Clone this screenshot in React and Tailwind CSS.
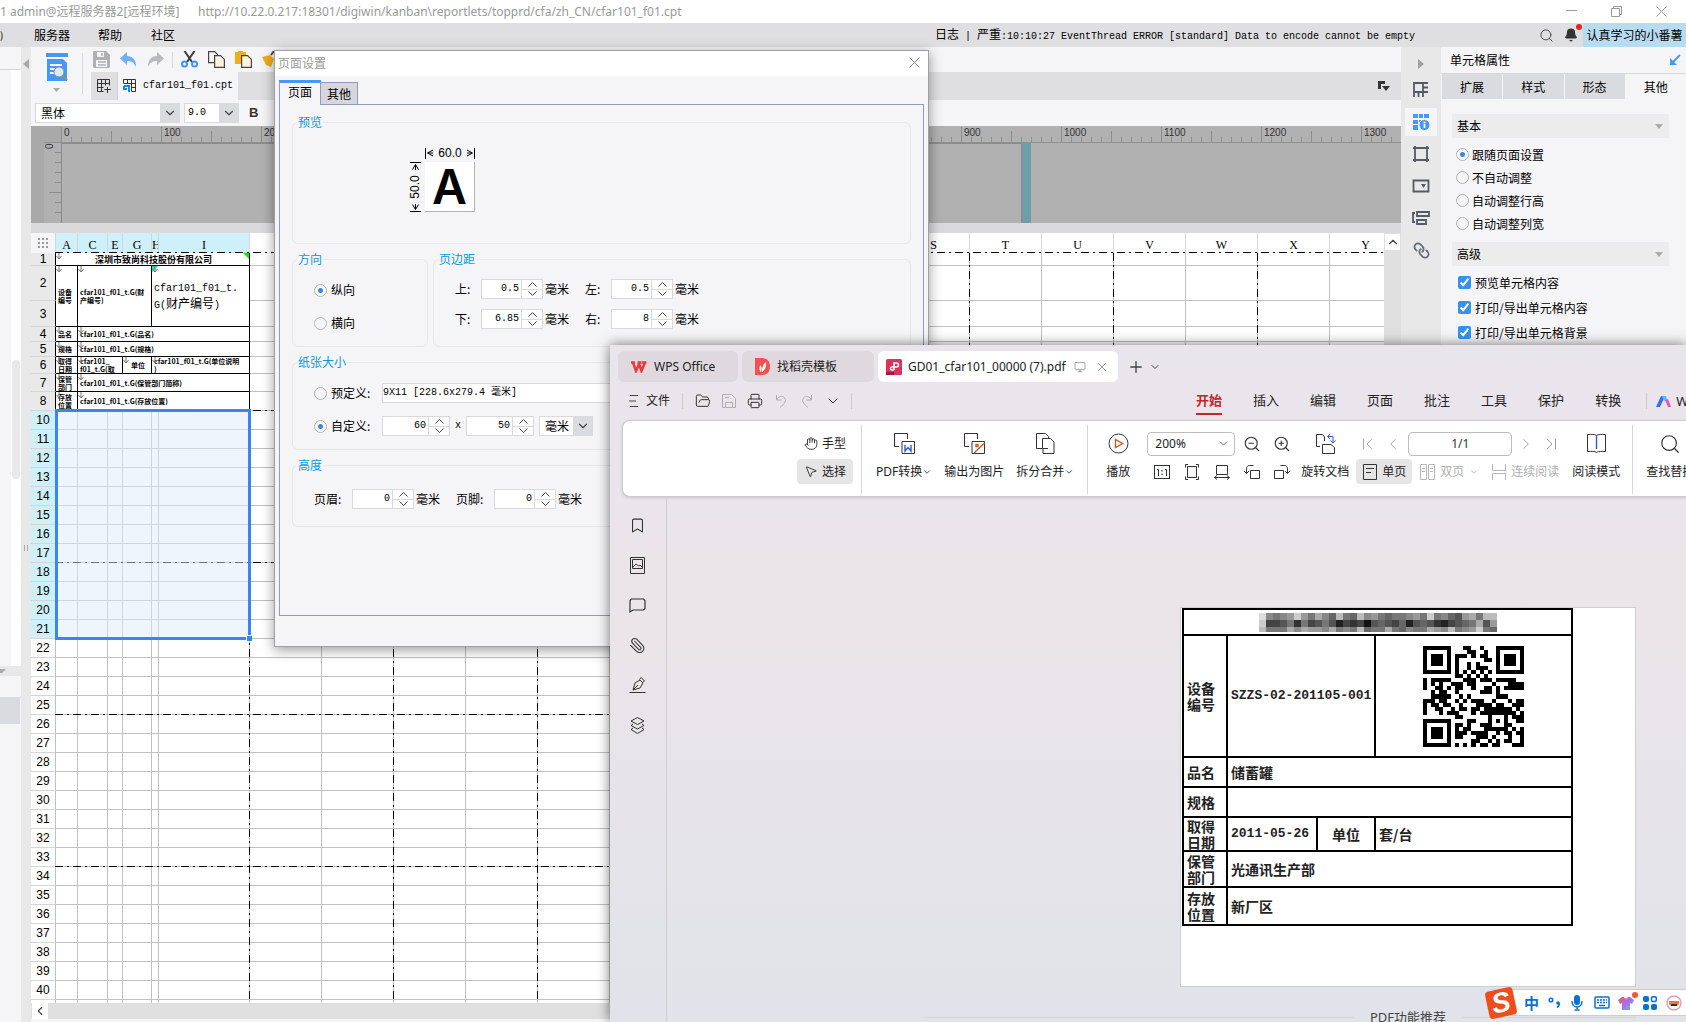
import { Fragment } from "react";
import {
  Bell,
  Bookmark,
  ChevronDown,
  ChevronLeft,
  ChevronRight,
  ChevronUp,
  FolderOpen,
  Hand,
  Layers,
  Link,
  Monitor,
  MousePointer2,
  Paperclip,
  Plus,
  Printer,
  Search,
  X,
  ZoomIn,
  ZoomOut,
} from "lucide-react";

const COLUMNS = [
  { name: "A", width: "w-[22px]", picked: true },
  { name: "C", width: "w-[30px]", picked: true },
  { name: "E", width: "w-[15px]", picked: true },
  { name: "G", width: "w-[29px]", picked: true },
  { name: "H", width: "w-[7px]", picked: true },
  { name: "I", width: "w-[91px]", picked: true },
  ..."JKLMNOPQRSTUVWXY".split("").map((name) => ({ name, width: "w-[72px]", picked: false })),
];

const REPORT_ROWS = [
  {
    height: "h-[13px]",
    cells: [{ text: "深圳市致尚科技股份有限公司", colSpan: 6, title: true, corner: "right" }],
  },
  {
    height: "h-[35px]",
    cells: [
      { text: "设备\n编号", rowSpan: 2 },
      { text: "cfar101_f01_t.G(财\n产编号)", colSpan: 3, rowSpan: 2 },
      { text: "cfar101_f01_t.\nG(财产编号)", colSpan: 2, rowSpan: 2, large: true, corner: "left" },
    ],
  },
  { height: "h-[26px]", cells: [] },
  { height: "h-[15px]", cells: [{ text: "品名" }, { text: "cfar101_f01_t.G(品名)", colSpan: 5 }] },
  { height: "h-[15px]", cells: [{ text: "规格" }, { text: "cfar101_f01_t.G(规格)", colSpan: 5 }] },
  {
    height: "h-[17px]",
    cells: [
      { text: "取得\n日期" },
      { text: "cfar101_\nf01_t.G(取", colSpan: 2 },
      { text: "单位", center: true },
      { text: "cfar101_f01_t.G(单位说明\n)", colSpan: 2 },
    ],
  },
  { height: "h-[18px]", cells: [{ text: "保管\n部门" }, { text: "cfar101_f01_t.G(保管部门简称)", colSpan: 5 }] },
  { height: "h-[19px]", cells: [{ text: "存放\n位置" }, { text: "cfar101_f01_t.G(存放位置)", colSpan: 5 }] },
];

const EMPTY_ROWS = Array.from({ length: 32 }, (_, i) => i + 10);

const QR_ROWS = [
  "1fc647f", "1043241", "175d65d", "175035d", "175285d", "1052e41", "1fd557f", "001aa00", "17c777c",
  "153b08f", "135935f", "0590740", "07ca070", "1d95c8b", "16c8f67", "132dbfa", "11717fd", "0018117",
  "1fc3153", "105a718", "17563f5", "175de5b", "1758e89", "1041959", "1fd56c7",
];

// one hex digit of grey per block
const MOSAIC_ROWS = [
  "d8789c97a86b76b897677897c78659a7bb",
  "c445737457524341565462565324567a59",
  "b777a8a998a787b677a76877a98b789c76",
];

// Latin runs in the bitmap-like UI font are half as wide as the Chinese ones
function Song({ children }) {
  return children.split(/([\x20-\x7e]+)/).map((part, i) =>
    i % 2 ? (
      <span key={i} className="text-[10px] font-['Liberation_Mono',monospace] whitespace-pre">
        {part}
      </span>
    ) : (
      <Fragment key={i}>{part}</Fragment>
    )
  );
}

function TitleBar() {
  return (
    <header className="flex h-[23px] shrink-0 items-center bg-white text-xs text-[#999] font-['Noto_Sans','Noto_Sans_CJK_SC',sans-serif]">
      <span className="w-[198px] shrink-0 whitespace-nowrap">1 admin@远程服务器2[远程环境]</span>
      <span className="whitespace-nowrap">
        http://10.22.0.217:18301/digiwin/kanban\reportlets/topprd/cfa/zh_CN/cfar101_f01.cpt
      </span>
      <div className="ml-auto flex items-center gap-[34px] pr-[19px]">
        <button aria-label="最小化">
          <svg width="11" height="11" fill="none" stroke="#999"><path d="M0 4.500h11" /></svg>
        </button>
        <button aria-label="还原">
          <svg width="11" height="11" fill="none" stroke="#999"><path d="M.5 2.500h8v8h-8zM2.500 2V.5h8v8H9" /></svg>
        </button>
        <button aria-label="关闭">
          <svg width="11" height="11" fill="none" stroke="#999"><path d="M.5.5l10 10M10.500.5l-10 10" /></svg>
        </button>
      </div>
    </header>
  );
}

function MenuBar() {
  return (
    <nav className="flex h-6 shrink-0 items-center bg-[#dfdfe1]">
      <span className="w-[34px] shrink-0 overflow-hidden text-[10px]">)</span>
      <button className="w-16 text-left">服务器</button>
      <button className="w-[53px] text-left">帮助</button>
      <button>社区</button>
      <p className="ml-auto whitespace-nowrap">
        <Song>日志 | 严重:10:10:27 EventThread ERROR [standard] Data to encode cannot be empty</Song>
      </p>
      <button aria-label="搜索" className="ml-[124px]">
        <Search size={15} strokeWidth={1.500} color="#444" />
      </button>
      <button aria-label="通知" className="relative ml-[10px]">
        <Bell size={14} fill="#333" color="#333" />
        <span className="absolute -top-1 -right-1 size-[6px] rounded-full bg-[#ee2020]"></span>
      </button>
      <button className="ml-[5px] h-6 w-[103px] bg-[#b7dbf1] whitespace-nowrap">认真学习的小番薯</button>
    </nav>
  );
}

function LeftPane() {
  return (
    <>
      <aside className="flex w-[21px] shrink-0 flex-col bg-[#f5f5f8]">
        <div className="h-[23px] border-b border-[#d5d5d8]"></div>
        <div className="flex h-[596px] justify-end">
          <div className="w-[10px] bg-white px-px pt-[290px]">
            <div className="h-[119px] rounded bg-[#e8e8e8]"></div>
          </div>
        </div>
        <div className="h-[10px] bg-[#e8e8e8]">
          <svg width="6" height="10"><path d="M0 3h6L2 7H0z" fill="#aaa" /></svg>
        </div>
        <div className="h-[22px] border-b border-[#dcdce0]"></div>
        <div className="mr-px h-[26px] bg-[#dadbdf]"></div>
      </aside>
      <div className="flex w-[10px] shrink-0 flex-col items-center bg-[#e8e8e8] pt-[12px]">
        <svg width="6" height="10"><path d="M6 0v10L0 5z" fill="#a8a8a8" /></svg>
        <svg width="4" height="6" className="mt-[476px]"><path d="M.5 0v6M3.500 0v6" stroke="#aaa" /></svg>
      </div>
    </>
  );
}

function Toolbar() {
  return (
    <div className="flex h-[79px] shrink-0 flex-col bg-[#f5f5f8]">
      <div className="flex h-[53px]">
        <button aria-label="预览" className="flex w-[51px] flex-col items-center pt-[6px]">
          <svg width="22" height="29" viewBox="0 0 22 29">
            <path d="M0 0h22v4H0zM1 6h16l4 4v18H1z" fill="#4299f7" />
            <path d="M4 12h12M4 16h5M4 20h5" stroke="#fff" strokeWidth="2" />
            <circle cx="13" cy="19" r="5" fill="#d9ebfc" stroke="#8b8f96" />
            <path d="M16.500 22.500L21 27" stroke="#8b8f96" strokeWidth="2" />
          </svg>
          <svg width="7" height="4" className="mt-[6px]"><path d="M0 0h7L3.500 4z" fill="#aaa" /></svg>
        </button>
        <div className="my-[6px] w-px bg-[#d8d8dc]"></div>
        <div className="ml-[8px] flex flex-1 flex-col">
          <div className="flex h-[25px] items-center gap-[10px] pl-[2px]">
            <button aria-label="保存">
              <svg width="17" height="17" viewBox="0 0 17 17">
                <path d="M1 0h12l4 4v12l-1 1H1l-1-1V1z" fill="#aeb0b4" />
                <path d="M4 1h7v5H4zM3 9h11v7H3z" fill="#f5f5f8" />
                <path d="M9 2v3M5 11h8M5 14h8" stroke="#aeb0b4" strokeWidth="1.500" />
              </svg>
            </button>
            <button aria-label="撤销">
              <svg width="17" height="16" viewBox="0 0 17 16"><path d="M7 0v4c6 0 9 4 9 11-2-4-4-6-9-6v4L0 6.500z" fill="#6fb0f5" /></svg>
            </button>
            <button aria-label="重做">
              <svg width="17" height="16" viewBox="0 0 17 16"><path d="M10 0v4C4 4 1 8 1 15c2-4 4-6 9-6v4l7-6.500z" fill="#b8babd" /></svg>
            </button>
            <div className="-mx-[2px] h-4 w-px bg-[#d8d8dc]"></div>
            <button aria-label="剪切">
              <svg width="17" height="17" viewBox="0 0 17 17" fill="none">
                <path d="M3.500 0l7.500 11M13.500 0L6 11" stroke="#3b3d42" strokeWidth="2" />
                <circle cx="3.500" cy="13" r="2.500" stroke="#3d96f5" strokeWidth="2" />
                <circle cx="13.500" cy="13" r="2.500" stroke="#3d96f5" strokeWidth="2" />
              </svg>
            </button>
            <button aria-label="复制">
              <svg width="17" height="17" viewBox="0 0 17 17" fill="#f5f5f8" stroke="#444" strokeWidth="1.200">
                <path d="M.6.6h6l3 3v8h-9z" />
                <path d="M6.600 4.600h6l3.800 3.800v8H6.600z" fill="#fdf3dc" />
              </svg>
            </button>
            <button aria-label="粘贴">
              <svg width="17" height="17" viewBox="0 0 17 17">
                <path d="M0 1h3V0h5v1h3v12H0z" fill="#efac1d" />
                <path d="M6.600 4.600h6l3.800 3.800v8H6.600z" fill="#fdf3dc" stroke="#444" strokeWidth="1.200" />
              </svg>
            </button>
            <button aria-label="格式刷">
              <svg width="17" height="17" viewBox="0 0 17 17"><path d="M0 6l8-2 4 4-3 8-5-2z" fill="#efac1d" /><path d="M9 4l3-4" stroke="#444" strokeWidth="2" /></svg>
            </button>
          </div>
          <div className="flex h-7 items-center bg-[#dfdfe2]">
            <button aria-label="新建" className="flex h-7 w-[26px] items-center justify-center">
              <svg width="14" height="14" viewBox="0 0 14 14" fill="none" stroke="#333">
                <path d="M.5.5h12v6M.5.500v12h6M.5 4.500h12M.5 8.500h6M4.500.5v12M8.500.5v6M10.500 8v6M7.500 10.500h6.500" />
              </svg>
            </button>
            <div className="flex h-7 items-center gap-[6px] border-l border-[#cfcfd3] bg-[#f5f5f8] px-[5px]">
              <svg width="14" height="14" viewBox="0 0 14 14" fill="none" stroke="#333">
                <path d="M.5 4V.5h12v12H9M.5 4.500h12M8.500 8.500h4M4.500.5v4M8.500.5v12" />
                <path d="M1 7h5v6M1 7v3h3" stroke="#1c8ad4" strokeWidth="2" />
              </svg>
              <Song>cfar101_f01.cpt</Song>
            </div>
            <button aria-label="窗口列表" className="mr-[11px] ml-auto">
              <svg width="12" height="10" viewBox="0 0 12 10" fill="#333"><path d="M0 0h7v3H3v5H0zM4 5h8l-4 5z" /></svg>
            </button>
          </div>
        </div>
      </div>
      <div className="flex h-[26px] items-center pl-1">
        <ComboBox label="字体" value="黑体" className="w-[145px] pl-[5px]" />
        <ComboBox label="字号" value="9.0" className="ml-1 w-[55px] pl-[3px] text-[10px] font-['Liberation_Mono',monospace]" />
        <button className="ml-[10px] text-[13px] font-bold text-[#333] font-['Liberation_Sans',sans-serif]">B</button>
      </div>
    </div>
  );
}

function ComboBox({ label, value, className }) {
  return (
    <span className="relative flex">
      <select aria-label={label} className={`h-5 appearance-none border border-[#dadade] bg-white ${className}`}>
        <option>{value}</option>
      </select>
      <span className="pointer-events-none absolute inset-y-0 right-0 flex w-5 items-center justify-center bg-[#dadbdf]">
        <ChevronDown size={14} color="#444" />
      </span>
    </span>
  );
}

function Rulers() {
  const marks = Array.from({ length: 14 }, (_, i) => i);
  const ticks = Array.from({ length: 135 }, (_, i) => i);
  return (
    <div className="flex h-[107px] shrink-0 flex-col bg-[#b1b1b1]">
      <svg className="h-[17px] w-full shrink-0 text-[10px] font-['Liberation_Sans',sans-serif]" fill="#333">
        <path d="M0 0h30v17H0z" fill="#a9a9a9" />
        {ticks.map((i) => (
          <path key={i} d={`M${30.5 + i * 10} ${i % 10 === 0 ? 1 : i % 5 === 0 ? 5 : 11}V16`} stroke="#8e8e8e" />
        ))}
        {marks.map((i) => (
          <text key={i} x={33 + i * 100} y="10">{i * 100}</text>
        ))}
        <path d="M13 16.500H1400" stroke="#909090" />
      </svg>
      <div className="flex flex-1">
        <svg className="h-20 w-[31px] text-[10px] font-['Liberation_Sans',sans-serif]" fill="#333">
          <path d="M0 0h13v80H0z" fill="#a9a9a9" />
          {[1, 2, 3, 4, 5, 6, 7].map((i) => (
            <path key={i} d={`M${i === 5 ? 18 : 24} ${i * 10 - 0.5}H30`} stroke="#8e8e8e" />
          ))}
          <text x="-6" y="22" transform="rotate(-90)">0</text>
          <path d="M30.500 0v80" stroke="#8a8a8a" />
        </svg>
        <div className="w-[960px] border-t border-r border-[#8a8a8a]"></div>
        <div className="w-[9px] bg-[#6f9eab]"></div>
      </div>
      <div className="h-[10px] bg-[#dadadd]"></div>
    </div>
  );
}

function CellMark() {
  return (
    <svg width="6" height="7" className="absolute top-0 left-0" fill="none" stroke="#777">
      <path d="M3 0v6M.5 3L3 6l2.500-3" />
    </svg>
  );
}

function ReportCell({ cell }) {
  let text = "text-[7px] leading-[8px] font-bold";
  if (cell.title) text = "text-[9px] leading-[11px] font-bold text-center";
  if (cell.large) text = "text-xs leading-[14px]";
  return (
    <td
      colSpan={cell.colSpan}
      rowSpan={cell.rowSpan}
      className={`relative overflow-hidden border-r border-b border-black p-0 pl-[2px] whitespace-pre ${text} ${cell.center ? "text-center" : ""}`}
    >
      {cell.corner === "left" && (
        <svg width="6" height="6" className="absolute top-0 left-0"><path d="M0 0h6L0 6z" fill="#1de0b4" /></svg>
      )}
      {cell.corner === "right" && (
        <svg width="6" height="6" className="absolute top-0 right-0"><path d="M0 0h6v6z" fill="#27dd0c" /></svg>
      )}
      <CellMark />
      {cell.large ? <Song>{cell.text}</Song> : cell.text}
    </td>
  );
}

function Sheet() {
  const blank = "border-r border-b border-[#c0c0c0]";
  return (
    <div className="relative min-h-0 flex-1 overflow-hidden bg-white">
      <table className="w-[1371px] table-fixed border-separate border-spacing-0 text-xs leading-3">
        <colgroup>
          <col className="w-[25px]" />
          {COLUMNS.map((col) => (
            <col key={col.name} className={col.width} />
          ))}
        </colgroup>
        <thead>
          <tr className="h-5 text-xs font-['Liberation_Serif',serif]">
            <th className="border-r border-[#d5d5d8] bg-[#f5f5f8] p-0">
              <svg width="12" height="12" className="mx-auto" fill="#999">
                {[0, 4, 8].map((y) => (
                  <path key={y} d={`M1 ${y + 1}h2v2h-2zM5 ${y + 1}h2v2h-2zM9 ${y + 1}h2v2h-2z`} />
                ))}
              </svg>
            </th>
            {COLUMNS.map((col) => (
              <th
                key={col.name}
                className={`overflow-hidden border-r border-[#d5d5d8] p-0 pt-[3px] font-normal ${col.picked ? "bg-[#cdf0fb]" : ""}`}
              >
                {col.name}
              </th>
            ))}
          </tr>
        </thead>
        <tbody>
          {REPORT_ROWS.map((row, i) => (
            <tr key={i} className={row.height}>
              <th className="border-r border-b border-r-black border-b-[#d5d5d8] bg-[#e9e9e9] p-0 font-normal font-['Liberation_Sans',sans-serif]">
                {i + 1}
              </th>
              {row.cells.map((cell) => (
                <ReportCell key={cell.text} cell={cell} />
              ))}
              {COLUMNS.slice(6).map((col) => (
                <td key={col.name} className={blank}></td>
              ))}
            </tr>
          ))}
          {EMPTY_ROWS.map((n) => (
            <tr key={n} className="h-[19px]">
              <th
                className={`border-r border-b border-r-[#c0c0c0] border-b-[#d5d5d8] p-0 font-normal font-['Liberation_Sans',sans-serif] ${n < 22 ? "bg-[#cdf0fb]" : ""}`}
              >
                {n}
              </th>
              {COLUMNS.map((col) => (
                <td key={col.name} className={blank}></td>
              ))}
            </tr>
          ))}
        </tbody>
      </table>

      {/* page breaks */}
      <svg className="pointer-events-none absolute inset-0 size-full" stroke="#000" strokeDasharray="8 4 2 4">
        {[19.5, 177.5, 329.5, 481.5, 633.5].map((y) => (
          <path key={y} d={`M24 ${y}H1400`} />
        ))}
        {Array.from({ length: 9 }, (_, i) => 218.5 + i * 144).map((x) => (
          <path key={x} d={`M${x} 20V900`} />
        ))}
      </svg>

      {/* selected range */}
      <div className="absolute top-[176px] left-6 h-[231px] w-[196px] border-3 border-[#3a86f0] bg-[#deecfb]/50">
        <span className="absolute -right-[4px] -bottom-[4px] size-[6px] border-t border-l border-white bg-[#3a86f0]"></span>
      </div>
    </div>
  );
}

function SheetArea() {
  return (
    <>
      <div className="flex min-h-0 flex-1">
        <Sheet />
        <div className="w-[17px] shrink-0 bg-[#e0e0e0]">
          <button aria-label="向上滚动" className="m-px flex h-4 w-[15px] items-center justify-center bg-white">
            <ChevronUp size={14} color="#444" />
          </button>
        </div>
      </div>
      <div className="mb-[3px] flex h-4 shrink-0 bg-[#e0e0e0]">
        <button aria-label="向左滚动" className="ml-px flex w-4 items-center justify-center bg-white">
          <ChevronLeft size={14} color="#444" />
        </button>
      </div>
    </>
  );
}

const SIDE_TOOLS = [
  {
    name: "单元格元素",
    icon: <path d="M2 2h9v9H2zM2 11v5M6.500 11v5M11 11v5M11 2h5M11 6.500h5M11 11h5" />,
  },
  {
    name: "单元格属性",
    active: true,
    icon: (
      <>
        <path d="M1 1h5v4H1zM7 1h4v4H7zM12 1h5v4h-5zM1 7h5v4H1zM1 12h5v5H1zM7 7h4v3H7z" fill="#4299f7" stroke="none" />
        <circle cx="12.500" cy="12" r="5.500" fill="#4299f7" stroke="#f5f5f8" strokeWidth="1" />
        <path d="M12.500 8.500v2M12.500 11v4" stroke="#fff" />
      </>
    ),
  },
  { name: "悬浮元素", icon: <path d="M3 3h12v12H3zM1 3h2V1M15 1v2h2M1 15h2v2M17 15h-2v2" /> },
  { name: "控件设置", icon: <><path d="M1.500 3.500h15v11h-15z" /><path d="M9 7h5l-2.500 4z" fill="#555a66" stroke="none" /></> },
  { name: "条件属性", icon: <path d="M5 3h12v4H5zM5 11h9v4H5zM3 4H1v9h2" /> },
];

function SideTools() {
  return (
    <div className="flex w-10 shrink-0 flex-col items-center gap-1 bg-[#e8e8e8] pt-[12px]">
      <svg width="6" height="10" className="mb-[3px]"><path d="M0 0v10l6-5z" fill="#a0a0a0" /></svg>
      {SIDE_TOOLS.map((tool) => (
        <button
          key={tool.name}
          aria-label={tool.name}
          className={`flex h-7 w-8 items-center justify-center ${tool.active ? "bg-[#f5f5f8]" : ""}`}
        >
          <svg width="18" height="18" fill="none" stroke="#555a66" strokeWidth="1.800">{tool.icon}</svg>
        </button>
      ))}
      <button aria-label="超级链接" className="flex h-7 w-8 items-center justify-center">
        <Link size={17} strokeWidth={2.500} color="#666b76" className="rotate-90" />
      </button>
    </div>
  );
}

const radioClass =
  "size-[13px] shrink-0 appearance-none rounded-full border border-[#b4b4b4] bg-[#f4f4f4] checked:bg-[radial-gradient(circle,#3b86ee_0_2px,#f8f8f8_3px)]";

function Section({ title }) {
  return (
    <button className="flex h-6 w-full items-center justify-between bg-[#ececec] pr-[6px] pl-[5px]">
      {title}
      <svg width="8" height="5"><path d="M0 0h8L4 5z" fill="#aaa" /></svg>
    </button>
  );
}

function PropertyPanel() {
  return (
    <aside className="w-[245px] shrink-0 bg-[#f5f5f8]">
      <div className="flex h-[27px] items-center justify-between border-b border-[#d8d8dc] pr-[5px] pl-[9px]">
        <h2>单元格属性</h2>
        <svg width="12" height="12" fill="none" stroke="#4299f7" strokeWidth="2">
          <path d="M11 1L3 9" />
          <path d="M1 4v7h7z" fill="#4299f7" stroke="none" />
        </svg>
      </div>
      <div className="flex h-[25px] gap-px pl-px">
        <button className="flex-1 bg-[#dadbdf]">扩展</button>
        <button className="flex-1 bg-[#dadbdf]">样式</button>
        <button className="flex-1 bg-[#dadbdf]">形态</button>
        <button className="flex-1">其他</button>
      </div>
      <div className="pt-[15px] pr-[17px] pl-[11px]">
        <Section title="基本" />
        <div className="flex flex-col pt-[5px] pb-[7px] pl-1">
          {["跟随页面设置", "不自动调整", "自动调整行高", "自动调整列宽"].map((name, i) => (
            <label key={name} className="flex h-[23px] items-center gap-[3px]">
              <input type="radio" name="fit" defaultChecked={i === 0} className={radioClass} />
              {name}
            </label>
          ))}
        </div>
        <Section title="高级" />
        <div className="flex flex-col pt-[4px] pl-[6px]">
          {["预览单元格内容", "打印/导出单元格内容", "打印/导出单元格背景"].map((name) => (
            <label key={name} className="flex h-[25px] items-center gap-[4px]">
              <input type="checkbox" defaultChecked className="size-[13px] accent-[#3592f0]" />
              {name}
            </label>
          ))}
        </div>
      </div>
    </aside>
  );
}

function Spinner({ label, value, wide }) {
  return (
    <span className={`flex h-5 shrink-0 border border-[#dadade] bg-white ${wide ? "w-[68px]" : "w-[62px]"}`}>
      <input
        aria-label={label}
        defaultValue={value}
        className="min-w-0 flex-1 pr-[2px] text-right text-[10px] font-['Liberation_Mono',monospace]"
      />
      <span className="flex w-[21px] flex-col divide-y divide-[#dadade] border-l border-[#dadade]">
        <button aria-label={`${label} +`} className="flex flex-1 items-center justify-center">
          <svg width="9" height="5" fill="none" stroke="#444"><path d="M.5 4.500l4-4 4 4" /></svg>
        </button>
        <button aria-label={`${label} -`} className="flex flex-1 items-center justify-center">
          <svg width="9" height="5" fill="none" stroke="#444"><path d="M.5.5l4 4 4-4" /></svg>
        </button>
      </span>
    </span>
  );
}

function Group({ title, className, children }) {
  return (
    <fieldset className={`min-w-0 rounded-md border border-[#e7e7ea] ${className}`}>
      <legend className="ml-1 px-px leading-[18px] text-[#0a9bdc]">{title}</legend>
      {children}
    </fieldset>
  );
}

function Margin({ label, value, wide }) {
  return (
    <div className={`flex items-center ${wide ? "w-[142px]" : "w-[130px]"}`}>
      <span className={wide ? "w-[38px]" : "w-[26px]"}>{label}:</span>
      <Spinner label={label} value={value} />
      <span className="ml-[2px]">毫米</span>
    </div>
  );
}

function PageSetupDialog() {
  return (
    <section
      role="dialog"
      aria-label="页面设置"
      className="absolute top-[50px] left-[274px] flex h-[597px] w-[655px] flex-col border border-[#a0a0a0] bg-[#f5f5f8] shadow-[0_3px_12px_rgba(0,0,0,0.4)]"
    >
      <div className="flex h-[25px] shrink-0 items-center justify-between bg-white pr-[8px] pb-[2px] pl-[3px] text-[#999]">
        页面设置
        <button aria-label="关闭">
          <svg width="11" height="11" fill="none" stroke="#888"><path d="M.5.5l10 10M10.500.5l-10 10" /></svg>
        </button>
      </div>
      <div className="flex h-7 shrink-0 items-end pl-1">
        <button className="z-10 -mb-px h-[25px] w-[42px] border-x border-t-3 border-x-[#8f9db9] border-t-[#4299f7] bg-[#f5f5f8] pb-[5px]">
          页面
        </button>
        <button className="h-[22px] w-[37px] border-t border-r border-[#8f9db9] bg-[#d6d6db]">其他</button>
      </div>
      <div className="mx-1 mb-[30px] flex flex-1 flex-col gap-[6px] border border-[#8f9db9] px-3 pt-2">
        <Group title="预览" className="h-[131px]">
          <div className="ml-[116px] grid w-[66px] grid-cols-[16px_50px] gap-y-[3px] pt-[16px] font-['Liberation_Sans',sans-serif]">
            <div className="col-start-2 flex h-3 items-center justify-between">
              <svg width="8" height="12" fill="none" stroke="#000"><path d="M.5 1v11M8 3L2.500 6 8 9M3 6h5" /></svg>
              60.0
              <svg width="8" height="12" fill="none" stroke="#000"><path d="M7.500 1v11M0 3l5.500 3L0 9M5 6H0" /></svg>
            </div>
            <div className="flex w-3 flex-col items-center justify-between">
              <svg width="11" height="9" fill="none" stroke="#000"><path d="M0 .5h11M2.500 7.500l3-5 3 5M5.500 3v5" /></svg>
              <span className="-rotate-90 leading-3">50.0</span>
              <svg width="11" height="9" fill="none" stroke="#000"><path d="M0 8.500h11M2.500 1.500l3 5 3-5M5.500 1v5" /></svg>
            </div>
            <div className="flex h-[50px] items-center justify-center border-r border-b border-[#b4b4b4] bg-white text-[48px] leading-[50px] font-semibold font-['Inter',sans-serif]">
              A
            </div>
          </div>
        </Group>
        <div className="flex gap-[5px]">
          <Group title="方向" className="h-[97px] w-[136px]">
            <div className="flex flex-col gap-[13px] pt-[12px] pl-[21px]">
              <label className="flex h-5 items-center gap-[4px]">
                <input type="radio" name="direction" defaultChecked className={radioClass} />
                纵向
              </label>
              <label className="flex h-5 items-center gap-[4px]">
                <input type="radio" name="direction" className={radioClass} />
                横向
              </label>
            </div>
          </Group>
          <Group title="页边距" className="h-[97px] flex-1">
            <div className="flex flex-col gap-[10px] pt-[11px] pl-[21px]">
              <div className="flex">
                <Margin label="上" value="0.5" />
                <Margin label="左" value="0.5" />
              </div>
              <div className="flex">
                <Margin label="下" value="6.85" />
                <Margin label="右" value="8" />
              </div>
            </div>
          </Group>
        </div>
        <Group title="纸张大小" className="h-[97px]">
          <div className="flex flex-col gap-[13px] pt-[12px] pl-[21px]">
            <div className="flex items-center">
              <label className="flex w-[68px] items-center gap-[4px]">
                <input type="radio" name="paper" className={radioClass} />
                预定义:
              </label>
              <select aria-label="预定义纸张" className="h-5 w-[300px] appearance-none border border-[#dadade] bg-white text-[10px] font-['Liberation_Mono','Noto_Sans_CJK_SC',monospace]">
                <option>9X11 [228.6x279.4 毫米]</option>
              </select>
            </div>
            <div className="flex items-center">
              <label className="flex w-[68px] items-center gap-[4px]">
                <input type="radio" name="paper" defaultChecked className={radioClass} />
                自定义:
              </label>
              <Spinner label="宽度" value="60" wide />
              <span className="w-4 text-center text-[10px] font-['Liberation_Mono',monospace]">x</span>
              <Spinner label="高度" value="50" wide />
              <span className="w-[5px]"></span>
              <ComboBox label="单位" value="毫米" className="w-[54px] pl-[5px]" />
            </div>
          </div>
        </Group>
        <Group title="高度" className="h-[71px]">
          <div className="flex pt-[15px] pl-[21px]">
            <Margin label="页眉" value="0" wide />
            <Margin label="页脚" value="0" wide />
          </div>
        </Group>
      </div>
    </section>
  );
}

function WpsTabs() {
  return (
    <div className="flex h-[31px] shrink-0 items-center gap-1 pl-2">
      <button className="flex h-[31px] w-[120px] items-center gap-[7px] rounded-md bg-[#dfd8de] pl-[13px]">
        <svg width="16" height="12" viewBox="0 0 16 12" fill="none" stroke="#f0383a" strokeWidth="2.500">
          <path d="M0 1.500h4M2 1.500l3 8.500 3.500-8M6.500 1.500h4M8.500 4l2 6L14 1.500M11 1.500h4.500" />
        </svg>
        WPS Office
      </button>
      <button className="flex h-[31px] w-[132px] items-center gap-[7px] rounded-md bg-[#dfd8de] pl-[13px]">
        <svg width="15" height="17" viewBox="0 0 15 17">
          <path d="M0 0h7c5 0 8 3.500 8 8.500S12 17 7 17H0z" fill="#f4504f" />
          <path d="M6 14C4 12 4 9 5.500 7 7 9 7 11 6 14zM7 14c0-4 1-8 4-10 .5 5-1 8-4 10z" fill="#fff" />
        </svg>
        找稻壳模板
      </button>
      <button className="flex h-[31px] w-[240px] items-center rounded-md bg-white pl-2 whitespace-nowrap">
        <svg width="16" height="16" viewBox="0 0 16 16" fill="none">
          <rect width="16" height="16" rx="1.500" fill="#e0305c" />
          <path d="M0 14.500h8" stroke="#a81648" strokeWidth="3" />
          <path d="M8 11V4h2.500a2 2 0 010 4H6a1.500 1.500 0 000 3h2" stroke="#fff" strokeWidth="1.600" />
        </svg>
        <span className="ml-[6px]">GD01_cfar101_00000 (7).pdf</span>
        <Monitor size={12} strokeWidth={1.500} color="#888" className="ml-2" />
        <X size={14} strokeWidth={1.500} color="#888" className="ml-[9px]" />
      </button>
      <button aria-label="新建标签" className="ml-[5px]"><Plus size={18} strokeWidth={1.800} color="#444" /></button>
      <button aria-label="标签列表"><ChevronDown size={12} color="#444" /></button>
    </div>
  );
}

const WPS_MENUS = ["开始", "插入", "编辑", "页面", "批注", "工具", "保护", "转换"];

function WpsMenu() {
  const divider = "h-4 w-px shrink-0 bg-[#cfc9ce]";
  return (
    <div className="flex h-[38px] shrink-0 items-center overflow-hidden pl-[19px] whitespace-nowrap">
      <button className="flex items-center gap-[7px]">
        <svg width="10" height="12" fill="none" stroke="#444"><path d="M1 .5h8M0 6h7M1 11.500h8" /></svg>
        文件
      </button>
      <div className={`ml-3 ${divider}`}></div>
      <div className="ml-3 flex items-center gap-[10px] text-[#333]">
        <button aria-label="打开"><FolderOpen size={16} strokeWidth={1.500} /></button>
        <button aria-label="保存">
          <svg width="16" height="16" fill="none" stroke="#b0aeb2"><path d="M1.500 1.500h9l4 4v9H12M4 14.500H1.500v-13M4.500 9.500h7v5h-7zM4 4.500h4" /></svg>
        </button>
        <button aria-label="打印"><Printer size={16} strokeWidth={1.500} /></button>
        <button aria-label="撤销">
          <svg width="16" height="16" fill="none" stroke="#b0aeb2"><path d="M3.500 2v5h5M3.500 7C5 4 8 2.500 10.500 4c4 3 1 7-3.500 10.500" /></svg>
        </button>
        <button aria-label="恢复">
          <svg width="16" height="16" fill="none" stroke="#b0aeb2"><path d="M12.500 2v5h-5M12.500 7C11 4 8 2.500 5.500 4c-4 3-1 7 3.500 10.500" /></svg>
        </button>
        <button aria-label="更多"><ChevronDown size={16} strokeWidth={1.500} /></button>
      </div>
      <div className={`ml-[10px] ${divider}`}></div>
      <div className="ml-[344px] flex gap-[31px] text-[13px]">
        {WPS_MENUS.map((name, i) => (
          <button
            key={name}
            className={`h-[27px] border-b-2 ${i === 0 ? "border-[#c2272d] font-bold text-[#c2272d]" : "border-transparent"}`}
          >
            {name}
          </button>
        ))}
      </div>
      <div className={`ml-[25px] ${divider}`}></div>
      <button className="ml-[9px] flex items-center gap-1 text-[13px]">
        <svg width="16" height="13" viewBox="0 0 16 13">
          <path d="M0 12L5 1h4L4 12z" fill="#3b6cf6" />
          <path d="M6 1h4l1 4-3 1z" fill="#3fc3f8" />
          <path d="M9 5l3 7h3l-3-8z" fill="#f052b8" />
        </svg>
        WPS AI
      </button>
    </div>
  );
}

function BigButton({ label, icon, caret, className }) {
  return (
    <button className={`flex shrink-0 flex-col items-center gap-[3px] ${className}`}>
      <span className="flex h-[25px] items-center">{icon}</span>
      <span className="flex h-[25px] items-center">
        {label}
        {caret && <ChevronDown size={10} color="#333" />}
      </span>
    </button>
  );
}

function Stroke({ size = 16, children }) {
  return (
    <svg width={size} height={size} viewBox={`0 0 ${size} ${size}`} fill="none" stroke="#333">
      {children}
    </svg>
  );
}

function Ribbon() {
  const divider = "-mt-[6px] h-[69px] w-px shrink-0 bg-[#d8d8d8]";
  const wide = "flex h-[25px] items-center gap-[4px] rounded px-[7px]";
  return (
    <div className="ml-[12px] flex h-[77px] shrink-0 overflow-hidden rounded-l-lg border border-r-0 border-[#cfcace] bg-white pt-[10px] pl-[174px] whitespace-nowrap shadow-[0_1px_3px_rgba(0,0,0,0.15)]">
      <div className="flex w-14 shrink-0 flex-col gap-[3px]">
        <button className={wide}><Hand size={15} strokeWidth={1.600} color="#333" />手型</button>
        <button className={`bg-[#e5e5e5] ${wide}`}>
          <MousePointer2 size={15} strokeWidth={1.600} color="#333" />
          选择
        </button>
      </div>
      <div className={`ml-2 ${divider}`}></div>
      <BigButton
        className="ml-[14px]"
        label="PDF转换"
        caret
        icon={
          <Stroke size={21}>
            <path d="M5 13.500H.5V.5h13V6" />
            <path d="M8 8.500h12.500v12H8z" />
            <path d="M11 12v6l3-3.500 3 3.500v-6" stroke="#2a5bd7" strokeWidth="1.400" />
          </Stroke>
        }
      />
      <BigButton
        className="ml-3"
        label="输出为图片"
        icon={
          <Stroke size={21}>
            <path d="M5 13.500H.5V.5h13V6" />
            <path d="M8 8.500h12.500v12H8z" />
            <path d="M10 20L20.500 10M12 11.500h2v2h-2z" stroke="#cf5a24" strokeWidth="1.400" />
          </Stroke>
        }
      />
      <BigButton
        className="ml-3"
        label="拆分合并"
        caret
        icon={
          <Stroke size={21}>
            <path d="M7 15.500H1.500V.5h9l3 3V5" />
            <path d="M13 5.500h2.500l3.500 3.500v11.500H8V16M13 5.500H7.500v10H13" />
          </Stroke>
        }
      />
      <div className={`ml-[13px] ${divider}`}></div>
      <BigButton
        className="ml-[18px]"
        label="播放"
        icon={
          <Stroke size={21}>
            <circle cx="10.500" cy="10.500" r="9.500" />
            <path d="M7.500 6.500v8l7-4z" stroke="#cf5a24" strokeWidth="1.400" />
          </Stroke>
        }
      />
      <div className="ml-[17px] flex shrink-0 flex-col gap-[3px]">
        <div className="flex h-[25px] items-center">
          <span className="relative flex items-center">
            <select aria-label="缩放" className="h-6 w-[88px] appearance-none rounded border border-[#bdbdbd] bg-white pl-[7px]">
              <option>200%</option>
            </select>
            <ChevronDown size={13} strokeWidth={1.500} color="#555" className="pointer-events-none absolute right-[5px]" />
          </span>
          <button aria-label="缩小" className="ml-[8px]"><ZoomOut size={18} strokeWidth={1.500} color="#333" /></button>
          <button aria-label="放大" className="ml-3"><ZoomIn size={18} strokeWidth={1.500} color="#333" /></button>
        </div>
        <div className="flex h-[25px] items-center gap-[14px] pl-[7px]">
          <button aria-label="实际大小">
            <Stroke>
              <rect x=".5" y="1.500" width="15" height="13" />
              <path d="M3 5.500h1.500V12M11 5.500h1.500V12" />
              <path d="M8 6v1.500M8 9.500V11" stroke="#2a5bd7" strokeWidth="1.500" />
            </Stroke>
          </button>
          <button aria-label="适合页面">
            <Stroke><path d="M3.500 2.500h9v11h-9zM1.500 3.500v-3H4M12 .5h2.500v3M14.500 12.500v3H12M4 15.500H1.500v-3" /></Stroke>
          </button>
          <button aria-label="适合宽度">
            <Stroke><path d="M2.500 1.500h11v9h-11zM.5 13.500h15M3 11.500l-2.500 2L3 15.500M13 11.500l2.500 2-2.500 2" /></Stroke>
          </button>
          <button aria-label="向左旋转">
            <Stroke><path d="M6.500 6.500h9v8h-9zM2.500 9V5c0-2 1-3.500 3-3.500h4M0 7l2.500 2.500L5 7" /></Stroke>
          </button>
          <button aria-label="向右旋转">
            <Stroke><path d="M.5 6.500h9v8h-9zM13.500 9V5c0-2-1-3.500-3-3.500h-4M11 7l2.500 2.500L16 7" /></Stroke>
          </button>
        </div>
      </div>
      <BigButton
        className="ml-[10px]"
        label="旋转文档"
        icon={
          <Stroke size={21}>
            <path d="M5 13.500H1.500V1.500h6l2 2.500v4" />
            <path d="M7.500 11.500H16l3.500 3v6h-12z" />
            <path d="M13 3.500h5v6M15 1l-2.500 2.500L15 6M15.500 7.500L18 10l2.500-2.500" stroke="#2a5bd7" />
          </Stroke>
        }
      />
      <div className="ml-[7px] flex shrink-0 flex-col gap-[3px]">
        <div className="flex h-[25px] items-center pl-[4px] text-[#999]">
          <button aria-label="首页"><svg width="16" height="16" fill="none" stroke="#aaa"><path d="M3.500 2.500v11M12 3L7 8l5 5" /></svg></button>
          <button aria-label="上一页" className="ml-[8px]"><ChevronLeft size={18} strokeWidth={1.200} /></button>
          <input aria-label="页码" defaultValue="1/1" className="ml-[6px] h-6 w-[104px] rounded border border-[#bdbdbd] text-center text-[#333]" />
          <button aria-label="下一页" className="ml-[5px]"><ChevronRight size={18} strokeWidth={1.200} /></button>
          <button aria-label="末页" className="ml-[8px]"><svg width="16" height="16" fill="none" stroke="#999"><path d="M12.500 2.500v11M4 3l5 5-5 5" /></svg></button>
        </div>
        <div className="flex h-[25px] items-center text-[#b0b0b0]">
          <button className="flex h-[25px] w-14 items-center gap-[5px] rounded bg-[#e5e5e5] pl-[7px] text-[#222]">
            <svg width="14" height="16" fill="none" stroke="#333"><path d="M.5.5h13v15H.5zM3 4.500h8M3 8.500h5" /></svg>
            单页
          </button>
          <button className="ml-2 flex items-center gap-[5px]">
            <svg width="15" height="16" fill="none" stroke="#b8b8b8"><path d="M.5.5h6v15h-6zM8.500.5h6v15h-6zM2 4.500h3M2 7.500h3M10 4.500h3M10 7.500h3" /></svg>
            双页
            <ChevronDown size={10} />
          </button>
          <button className="ml-[13px] flex items-center gap-[5px]">
            <svg width="14" height="16" fill="none" stroke="#b8b8b8"><path d="M.5 0v6.500h13V0M.5 16v-6.500h13V16" /></svg>
            连续阅读
          </button>
        </div>
      </div>
      <BigButton
        className="ml-[13px]"
        label="阅读模式"
        icon={
          <Stroke size={21}>
            <path d="M10.500 19.500c-2-1.500-5-1-9-1V1.500c4 0 7-.5 9 1 2-1.500 5-1 9-1v17c-4 0-7-.5-9 1z" />
            <path d="M10.500 3v13" stroke="#2a5bd7" strokeWidth="1.400" />
          </Stroke>
        }
      />
      <div className={`ml-3 ${divider}`}></div>
      <BigButton className="ml-[13px]" label="查找替换" icon={<Search size={22} strokeWidth={1.300} color="#333" />} />
    </div>
  );
}

function QrCode() {
  return (
    <svg width="101" height="101" viewBox="0 0 25 25" shapeRendering="crispEdges" className="mx-auto">
      {QR_ROWS.flatMap((row, y) =>
        parseInt(row, 16)
          .toString(2)
          .padStart(25, "0")
          .split("")
          .map((bit, x) => (bit === "1" ? <rect key={`${x}-${y}`} x={x} y={y} width="1" height="1" /> : null))
      )}
    </svg>
  );
}

function Mosaic() {
  return (
    <svg width="238" height="19" className="mx-auto" shapeRendering="crispEdges">
      {MOSAIC_ROWS.map((row, y) =>
        row.split("").map((grey, x) => (
          <rect key={`${x}-${y}`} x={x * 7} y={y * 7} width="7" height="7" fill={`#${grey}${grey}${grey}`} />
        ))
      )}
    </svg>
  );
}

function AssetCard() {
  const cell = "border-2 border-black p-0 pl-[3px] text-left";
  return (
    <table className="ml-px w-[391px] table-fixed border-collapse text-sm leading-4 font-bold font-['Noto_Sans_CJK_SC',sans-serif]">
      <colgroup>
        <col className="w-[44px]" />
        <col className="w-[90px]" />
        <col className="w-[58px]" />
        <col />
      </colgroup>
      <tbody>
        <tr className="h-[26px]">
          <td colSpan={4} className="border-2 border-black p-0"><Mosaic /></td>
        </tr>
        <tr className="h-[122px]">
          <th className={cell}>设备<br />编号</th>
          <td colSpan={2} className={`${cell} text-[13px] font-['Liberation_Mono',monospace]`}>SZZS-02-201105-001</td>
          <td className="border-2 border-black p-0"><QrCode /></td>
        </tr>
        <tr className="h-[30px]">
          <th className={cell}>品名</th>
          <td colSpan={3} className={cell}>储蓄罐</td>
        </tr>
        <tr className="h-[30px]">
          <th className={cell}>规格</th>
          <td colSpan={3} className={cell}></td>
        </tr>
        <tr className="h-[34px]">
          <th className={cell}>取得<br />日期</th>
          <td className={`${cell} text-[13px] font-['Liberation_Mono',monospace]`}>2011-05-26</td>
          <td className="border-2 border-black p-0 text-center">单位</td>
          <td className={cell}>套/台</td>
        </tr>
        <tr className="h-[36px]">
          <th className={cell}>保管<br />部门</th>
          <td colSpan={3} className={cell}>光通讯生产部</td>
        </tr>
        <tr className="h-[38px]">
          <th className={cell}>存放<br />位置</th>
          <td colSpan={3} className={cell}>新厂区</td>
        </tr>
      </tbody>
    </table>
  );
}

function WpsWindow() {
  const side = { size: 17, strokeWidth: 1.5, color: "#333" };
  return (
    <section
      aria-label="WPS Office"
      className="absolute top-[345px] right-0 bottom-0 left-[610px] flex flex-col overflow-hidden bg-linear-to-b from-[#e9e5ec] via-[#ebe5e9] via-40% to-[#e0e3e9] pt-[6px] text-xs leading-4 text-[#222] shadow-[0_0_12px_rgba(0,0,0,0.55)] font-['Noto_Sans','Noto_Sans_CJK_SC',sans-serif]"
    >
      <WpsTabs />
      <WpsMenu />
      <Ribbon />
      <div className="flex min-h-0 flex-1">
        <div className="flex w-[57px] shrink-0 flex-col items-center gap-[23px] border-r border-[#d0cdd2] pt-[20px] pr-[2px]">
          <button aria-label="书签" className="h-[17px]"><Bookmark {...side} /></button>
          <button aria-label="缩略图" className="h-[17px]">
            <svg width="17" height="17" fill="none" stroke="#333"><path d="M1.500.5h14v16h-14zM3.500 2.500h10v9h-10zM4 10l3-3 2.500 2L11 8l2 2" /></svg>
          </button>
          <button aria-label="批注" className="h-[17px]">
            <svg width="17" height="17" fill="none" stroke="#333" strokeWidth="1.200"><path d="M2.500 2h12l1.500 1.500v8L14.500 13H4l-3 2V3.500z" /></svg>
          </button>
          <button aria-label="附件" className="h-[17px]"><Paperclip {...side} className="-scale-x-100" /></button>
          <button aria-label="签名" className="h-[17px]">
            <svg width="17" height="17" fill="none" stroke="#333"><path d="M.5 15.500h16M4 13l2-7 5-3 3 3-3 5zM10.500 2.500l1.500-2 3.500 3.500-2 1.500M4 13l5-5" /></svg>
          </button>
          <button aria-label="图层" className="h-[17px]">
            <svg width="17" height="17" fill="none" stroke="#333"><path d="M8.500.5l6.500 3.500-6.500 3.500L2 4zM2 8.500l6.500 3.500L15 8.500M2 8.500l2-1.500M15 8.500L13 7M2 12.500l6.500 4 6.500-4M2 12.500l2-1.500M15 12.500L13 11" /></svg>
          </button>
        </div>
        <div className="flex min-w-0 flex-1 flex-col items-end pt-[110px] pr-[50px]">
          <div className="h-[380px] w-[456px] shrink-0 border border-[#cfcfd3] bg-white">
            <AssetCard />
          </div>
          <div className="mt-[22px] flex w-full items-center gap-4 pl-[256px] text-[13px] whitespace-nowrap text-[#444]">
            <span className="h-px flex-1 bg-[#d2d4d9]"></span>
            PDF功能推荐
            <span className="h-px w-[174px] bg-[#d2d4d9]"></span>
          </div>
        </div>
      </div>
    </section>
  );
}

function ImeBar() {
  return (
    <div className="absolute right-0 bottom-[6px] flex h-[27px] w-[196px] items-center border-y border-[#b5d3f0] bg-white pl-[33px] text-[#0a6fd6]">
      <span className="absolute -left-[3px] flex size-7 -rotate-12 items-center justify-center rounded bg-[#ee4e1c] text-[28px] leading-7 font-bold text-white italic font-['Liberation_Sans',sans-serif]">
        S
      </span>
      <button className="w-[17px] text-[15px] font-bold font-['Noto_Sans_CJK_SC',sans-serif]">中</button>
      <button aria-label="标点" className="ml-[8px]">
        <svg width="14" height="14" fill="none" stroke="#0a6fd6" strokeWidth="1.500"><circle cx="3" cy="4" r="1.800" /><circle cx="10" cy="7" r="1.800" fill="#0a6fd6" stroke="none" /><path d="M11 7c.5 2 0 3.500-2 4.500" /></svg>
      </button>
      <button aria-label="语音" className="ml-[9px]">
        <svg width="12" height="16" fill="none" stroke="#0a6fd6" strokeWidth="1.500"><rect x="3" y="0" width="6" height="10" rx="3" fill="#0a6fd6" stroke="none" /><path d="M1 6c0 8 10 8 10 0M6 12v2M3.500 15h5" /></svg>
      </button>
      <button aria-label="键盘" className="ml-[11px]">
        <svg width="16" height="13" fill="none" stroke="#0a6fd6" strokeWidth="1.500"><rect x="1" y="1" width="14" height="11" rx="1" /><path d="M3 4h10M3 6.500h10" strokeDasharray="2 1" /><path d="M5 9.500h6" /></svg>
      </button>
      <button aria-label="皮肤" className="relative ml-[8px]">
        <svg width="16" height="14">
          <defs>
            <linearGradient id="shirt" x1="0" y1="0" x2="1" y2="1"><stop offset="0" stopColor="#f2603f" /><stop offset=".5" stopColor="#a96cf0" /><stop offset="1" stopColor="#4bc7fa" /></linearGradient>
          </defs>
          <path d="M4 1h2c1 2 3 2 4 0h2l4 3-2 4-2-1v7H4V7L2 8 0 4z" fill="url(#shirt)" />
        </svg>
        <span className="absolute -top-1 -right-1 size-[6px] rounded-full bg-[#ff5133]"></span>
      </button>
      <button aria-label="工具箱" className="ml-[9px]">
        <svg width="14" height="14" fill="#0a6fd6"><rect width="6" height="6" rx="2" /><rect x="8.500" y=".7" width="4.800" height="4.800" rx="1.500" fill="none" stroke="#0a6fd6" strokeWidth="1.500" /><rect y="8" width="6" height="6" rx="2" /><rect x="8" y="8" width="6" height="6" rx="2" /></svg>
      </button>
      <button aria-label="助手" className="ml-[9px]">
        <svg width="16" height="17" fill="none"><ellipse cx="8" cy="9" rx="7" ry="7" stroke="#e79ac0" strokeWidth="1.500" /><path d="M3 7h10v3l-2 2H5l-2-2z" fill="#f47a20" /><path d="M5 10h6v2H5z" fill="#333" /></svg>
      </button>
    </div>
  );
}

export default function App() {
  return (
    <main className="relative flex h-screen w-full flex-col overflow-hidden text-xs leading-4 text-black font-['Noto_Sans_CJK_SC',sans-serif]">
      <TitleBar />
      <MenuBar />
      <div className="flex min-h-0 flex-1">
        <LeftPane />
        <div className="flex min-w-0 flex-1 flex-col bg-[#f5f5f8]">
          <Toolbar />
          <Rulers />
          <SheetArea />
        </div>
        <SideTools />
        <PropertyPanel />
      </div>
      <PageSetupDialog />
      <WpsWindow />
      <ImeBar />
    </main>
  );
}
